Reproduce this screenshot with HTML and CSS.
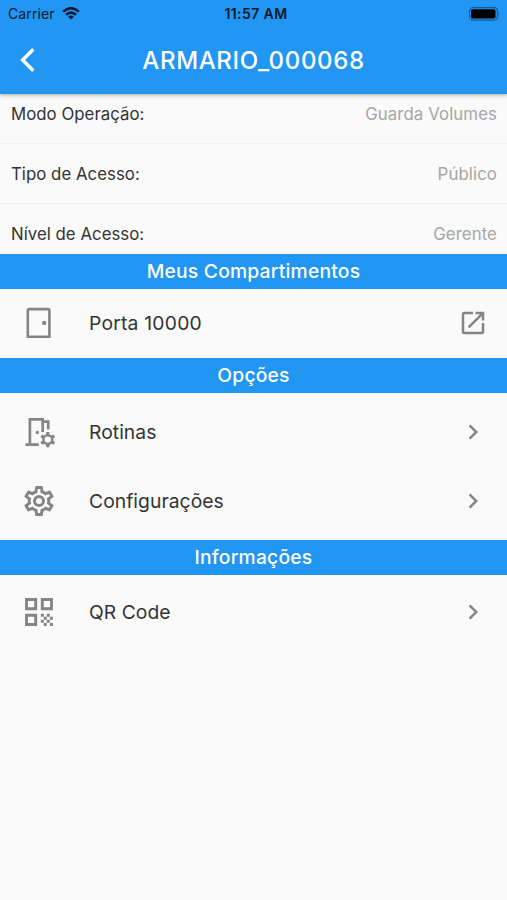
FILE: index.html
```html
<!DOCTYPE html>
<html lang="pt-BR">
<head>
<meta charset="utf-8">
<title>ARMARIO_000068</title>
<link rel="stylesheet" href="styles.css">
</head>
<body>
<header class="top">
  <div class="status">
    <div class="carrier"><span>Carrier</span>
      <svg width="18" height="13" viewBox="0 0 18 13"><g fill="none" stroke="#06182a" stroke-width="2.5"><path d="M1.2 4.6Q9-2.2 16.8 4.6"/><path d="M4 7.8Q9 3.5 14 7.8"/></g><path d="M6.2 9.7Q9 7.5 11.8 9.7L9 12.6Z" fill="#06182a"/></svg>
    </div>
    <time class="time">11:57 AM</time>
    <svg class="battery" width="32" height="14" viewBox="0 0 32 14"><rect x=".6" y=".6" width="27.8" height="12.5" rx="3.5" fill="none" stroke="#145c98" stroke-width="1.1"/><rect x="2" y="2.3" width="24.5" height="9.2" rx="1.8" fill="#000"/><path d="M29.5 4.7q2 2.2 0 4.4z" fill="#145c98"/></svg>
  </div>
  <div class="bar">
    <svg class="back" width="16" height="26" viewBox="0 0 16 26"><path d="M13.3 2.2 2.6 13l10.7 10.8" fill="none" stroke="#fff" stroke-width="3.4"/></svg>
    <h1>ARMARIO_000068</h1>
  </div>
</header>
<main>
  <dl class="facts">
    <div class="fact"><dt>Modo Operação:</dt><dd>Guarda Volumes</dd></div>
    <div class="fact"><dt>Tipo de Acesso:</dt><dd>Público</dd></div>
    <div class="fact"><dt>Nível de Acesso:</dt><dd>Gerente</dd></div>
  </dl>
  <h2>Meus Compartimentos</h2>
  <div class="row">
    <svg class="lead" viewBox="0 0 36 36"><path d="M6.800 31.800V5.600q0-1.500 1.500-1.500h18.600q1.500 0 1.500 1.500V31.800Z" fill="none" stroke="#858585" stroke-width="2.600"/><circle cx="23.200" cy="17.900" r="2.200" fill="#858585"/></svg>
    <span class="label door">Porta 10000</span>
    <svg class="trail" viewBox="0 0 24 24"><path fill="#858585" d="M19 19H5V5h7V3H5a2 2 0 0 0-2 2v14a2 2 0 0 0 2 2h14c1.100 0 2-.9 2-2v-7h-2v7zM14 3v2h3.590l-9.830 9.830 1.410 1.410L19 6.410V10h2V3h-7z"/></svg>
  </div>
  <h2>Opções</h2>
  <div class="group">
    <div class="row">
      <svg class="lead" viewBox="0 0 36 36"><g fill="none" stroke="#858585"><path d="M4.400 30.700H17.800M8.900 30.500V5.300H21.700V18M21.700 7.600H27.200V15.500" stroke-width="2.700"/><circle cx="26.800" cy="25.600" r="4.400" stroke-width="2.400"/><path stroke-width="3.200" d="M26.800 20.800v-2.800M26.800 30.400v2.800M22.640 23.200l-2.430-1.400M30.960 28l2.430 1.400M22.640 28l-2.430 1.400M30.960 23.200l2.430-1.400"/></g><circle cx="16.300" cy="18.400" r="1.700" fill="#858585"/></svg>
      <span class="label">Rotinas</span>
      <svg class="trail" viewBox="0 0 24 24"><path fill="#858585" d="M8.590 16.590 13.170 12 8.590 7.410 10 6l6 6-6 6z"/></svg>
    </div>
    <div class="row">
      <svg class="lead" viewBox="0 0 24 24"><path fill="#858585" d="M12,8A4,4 0 0,1 16,12A4,4 0 0,1 12,16A4,4 0 0,1 8,12A4,4 0 0,1 12,8M12,10A2,2 0 0,0 10,12A2,2 0 0,0 12,14A2,2 0 0,0 14,12A2,2 0 0,0 12,10M10,22C9.750,22 9.540,21.820 9.500,21.580L9.130,18.930C8.500,18.680 7.960,18.340 7.440,17.940L4.950,18.950C4.730,19.030 4.460,18.950 4.340,18.730L2.340,15.270C2.210,15.050 2.270,14.780 2.460,14.630L4.570,12.970L4.500,12L4.570,11L2.460,9.370C2.270,9.220 2.210,8.950 2.340,8.730L4.340,5.270C4.460,5.050 4.730,4.960 4.950,5.050L7.440,6.050C7.960,5.660 8.500,5.320 9.130,5.070L9.500,2.420C9.540,2.180 9.750,2 10,2H14C14.250,2 14.460,2.180 14.500,2.420L14.870,5.070C15.500,5.320 16.040,5.660 16.560,6.050L19.050,5.050C19.270,4.960 19.540,5.050 19.660,5.270L21.660,8.730C21.790,8.950 21.730,9.220 21.540,9.370L19.430,11L19.500,12L19.430,13L21.540,14.630C21.730,14.780 21.790,15.050 21.660,15.270L19.660,18.730C19.540,18.950 19.270,19.040 19.050,18.950L16.560,17.950C16.040,18.340 15.500,18.680 14.870,18.930L14.500,21.580C14.460,21.820 14.250,22 14,22H10M11.250,4L10.880,6.610C9.680,6.860 8.620,7.500 7.850,8.390L5.440,7.350L4.690,8.600L6.800,10.150C6.400,11.370 6.400,12.640 6.800,13.840L4.680,15.400L5.430,16.650L7.860,15.610C8.630,16.500 9.680,17.140 10.870,17.380L11.240,20H12.760L13.130,17.390C14.320,17.140 15.370,16.500 16.140,15.610L18.570,16.650L19.320,15.400L17.200,13.850C17.600,12.640 17.600,11.370 17.200,10.150L19.310,8.600L18.560,7.350L16.150,8.390C15.380,7.500 14.320,6.860 13.120,6.620L12.750,4H11.250Z"/></svg>
      <span class="label">Configurações</span>
      <svg class="trail" viewBox="0 0 24 24"><path fill="#858585" d="M8.590 16.590 13.170 12 8.590 7.410 10 6l6 6-6 6z"/></svg>
    </div>
  </div>
  <h2>Informações</h2>
  <div class="group last">
    <div class="row">
      <svg class="lead" viewBox="0 0 36 36"><g fill="none" stroke="#858585" stroke-width="2.900"><path d="M5.500 5.500h9.200v9.200H5.500zM21.300 5.500h9.200v9.200h-9.200zM5.500 21.300h9.200v9.200H5.500z"/></g><path fill="#858585" d="M19.800 19.800h3v3h-3zM25.800 19.800h3v3h-3zM22.800 22.800h3v3h-3zM28.900 22.800h3v3h-3zM19.800 25.800h3v3h-3zM25.800 25.800h3v3h-3zM22.800 28.900h3v3h-3zM28.900 28.900h3v3h-3z"/></svg>
      <span class="label">QR Code</span>
      <svg class="trail" viewBox="0 0 24 24"><path fill="#858585" d="M8.590 16.590 13.170 12 8.590 7.410 10 6l6 6-6 6z"/></svg>
    </div>
  </div>
</main>
</body>
</html>
```
FILE: styles.css
```css
* { box-sizing: border-box; }
body {
  margin: 0;
  min-height: 900px;
  background: #fafafa;
  color: #333;
  font-family: Inter, "Liberation Sans", sans-serif;
}
svg { display: block; flex: none; }
.top {
  position: relative;
  height: 94px;
  background: #2196f3;
  box-shadow: 0 1px 4px rgba(0, 0, 0, .35);
}
.status {
  display: grid;
  grid-template-columns: 1fr auto 1fr;
  align-items: center;
  height: 27px;
  padding: 0 6px 0 8px;
  color: #06182a;
}
.carrier { display: flex; align-items: center; gap: 7px; font-size: 14px; letter-spacing: .1px; }
.time { padding-left: 3px; font-size: 14px; font-weight: 600; letter-spacing: .4px; }
.battery { justify-self: end; }
.bar {
  display: grid;
  grid-template-columns: 40px 1fr 40px;
  align-items: center;
  height: 65px;
  padding: 0 19px;
}
.back { margin-left: 1px; }
h1 {
  margin: 0;
  padding-top: 1px;
  color: #fff;
  font-size: 24px;
  font-weight: 500;
  letter-spacing: .66px;
  text-align: center;
  white-space: nowrap;
}
.facts { margin: 0; height: 160px; }
.fact {
  display: flex;
  justify-content: space-between;
  align-items: center;
  height: 60px;
  padding: 0 10px 0 11px;
  border-bottom: 1px solid #f0f0f0;
  font-size: 16.8px;
  letter-spacing: .03px;
}
.fact:first-child { height: 50px; padding-bottom: 9px; }
.fact:last-child { height: 50px; padding-top: 10px; border-bottom: 0; }
dt, dd { margin: 0; }
dd { color: #a6a6a6; letter-spacing: .1px; }
h2 {
  margin: 0;
  height: 35px;
  line-height: 35px;
  background: #2196f3;
  color: #fff;
  font-size: 19.3px;
  font-weight: 500;
  letter-spacing: .2px;
  text-align: center;
}
.row {
  display: flex;
  align-items: center;
  height: 69px;
  padding: 0 19px 1px 21px;
}
.lead { width: 36px; height: 36px; }
.trail { width: 30px; height: 30px; margin-left: auto; }
.label { margin-left: 32px; font-size: 19.3px; letter-spacing: .05px; }
.door { letter-spacing: .22px; }
.group { padding: 5px 0 4px; }
.group .row + .row { padding-bottom: 2px; }
.last { padding-top: 3px; }
```
